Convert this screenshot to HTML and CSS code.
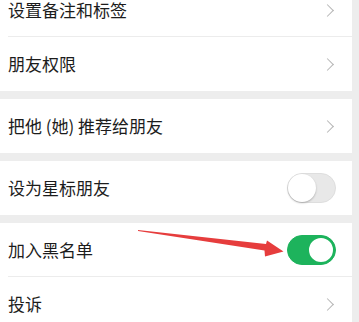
FILE: index.html
```html
<!DOCTYPE html>
<html lang="zh">
<head>
<meta charset="utf-8">
<link rel="stylesheet" href="styles.css">
</head>
<body>
<div class="page">
  <div class="group">
    <div class="row sep"><span class="label">设置备注和标签</span><span class="chev"></span></div>
    <div class="row"><span class="label">朋友权限</span><span class="chev"></span></div>
  </div>
  <div class="group">
    <div class="row"><span class="label">把他 (她) 推荐给朋友</span><span class="chev"></span></div>
  </div>
  <div class="group">
    <div class="row"><span class="label">设为星标朋友</span><span class="switch"><span class="knob"></span></span></div>
  </div>
  <div class="group">
    <div class="row sep arrow-row"><span class="label">加入黑名单</span><span class="switch on"><span class="knob"></span></span>
      <svg class="arrow" width="300" height="40" viewBox="0 0 300 40"><polygon points="138,7 266,21 267,17.5 283.5,28.5 265,33.5 264.5,27.5 138,8" fill="#e63d3d"/></svg>
    </div>
    <div class="row"><span class="label">投诉</span><span class="chev"></span></div>
  </div>
</div>
</body>
</html>
```
FILE: styles.css
```css
html, body {
  margin: 0;
  padding: 0;
  background: #ededed;
  overflow: hidden;
}
body {
  width: 359px;
  height: 322px;
  font-family: "Noto Sans CJK SC", "Noto Sans", sans-serif;
}
.page {
  margin-top: -17px;
  width: 352px;
  display: flex;
  flex-direction: column;
  gap: 8px;
}
.group {
  background: #fff;
}
.row {
  box-sizing: border-box;
  height: 54px;
  padding: 0 16px 0 8px;
  display: flex;
  align-items: center;
  justify-content: space-between;
  position: relative;
}
.row.sep::after {
  content: "";
  position: absolute;
  left: 8px;
  right: 0;
  bottom: 0;
  height: 1px;
  background: #ececec;
}
.label {
  font-size: 17px;
  color: #1c1c1c;
  line-height: 24px;
}
.chev {
  width: 8px;
  height: 8px;
  border-top: 1.3px solid #b5b5b5;
  border-right: 1.3px solid #b5b5b5;
  transform: rotate(45deg);
  margin-right: 4px;
}
.switch {
  box-sizing: border-box;
  width: 49px;
  height: 30px;
  border-radius: 15px;
  background: #e8e8e8;
  border: 1px solid #dedede;
  position: relative;
}
.knob {
  position: absolute;
  top: 0;
  left: 0;
  box-sizing: border-box;
  width: 28px;
  height: 28px;
  border-radius: 50%;
  background: #fff;
  box-shadow: 0 1px 2px rgba(0,0,0,0.25);
}
.switch.on {
  background: #1db35c;
  border-color: #1db35c;
}
.switch.on .knob {
  left: auto;
  right: 0;
  box-shadow: none;
  border: 2px solid #1db35c;
}
.arrow {
  position: absolute;
  left: 0;
  top: 0;
  pointer-events: none;
}
```
